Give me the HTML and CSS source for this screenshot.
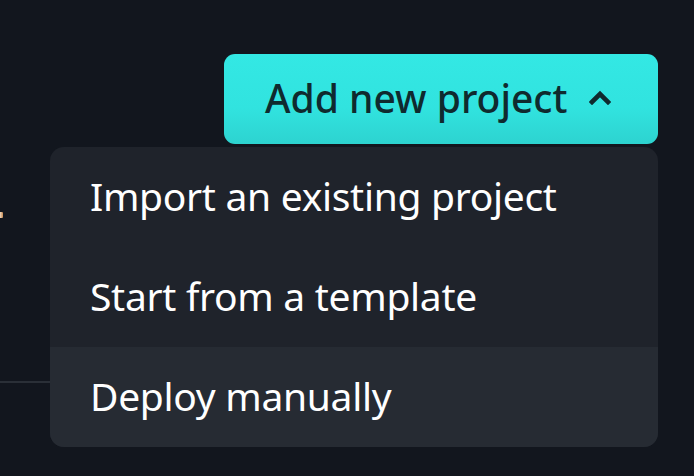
FILE: index.html
```html
<!DOCTYPE html>
<html lang="en">
<head>
<meta charset="utf-8">
<link rel="stylesheet" href="styles.css">
<title>Add new project</title>
</head>
<body>
<div class="page">
  <div class="backdrop">
    <span class="peek" aria-hidden="true"></span>
    <div class="divider"></div>
  </div>
  <div class="toolbar">
    <div class="dropdown">
      <button class="add-btn" type="button">
        <span>Add new project</span>
        <svg class="chev" width="22" height="15" viewBox="0 0 22 15" aria-hidden="true"><path d="M3 12 L11 4 L19 12" fill="none" stroke="currentColor" stroke-width="4.6" stroke-linecap="square" stroke-linejoin="miter"/></svg>
      </button>
      <ul class="menu">
        <li class="item">Import an existing project</li>
        <li class="item">Start from a template</li>
        <li class="item active">Deploy manually</li>
      </ul>
    </div>
  </div>
</div>
</body>
</html>
```
FILE: styles.css
```css
* { box-sizing: border-box; }
html, body {
  margin: 0;
  padding: 0;
  background: #12161e;
  width: 694px;
  height: 476px;
  overflow: hidden;
}
body {
  font-family: "Noto Sans", "Open Sans", sans-serif;
}
.page {
  position: relative;
  width: 694px;
  height: 476px;
}
.backdrop {
  position: absolute;
  inset: 0;
}
.peek {
  position: absolute;
  left: 0;
  top: 212px;
  width: 3px;
  height: 6px;
  background: linear-gradient(90deg, #f0d8c0, #c88a50);
  border-radius: 0 1px 1px 0;
}
.divider {
  position: absolute;
  left: 0;
  top: 381px;
  width: 60px;
  height: 2px;
  background: #2a2f37;
}
.toolbar {
  position: relative;
  display: flex;
  justify-content: flex-end;
  padding: 54px 36px 0 0;
}
.dropdown {
  position: relative;
}
.add-btn {
  display: flex;
  align-items: center;
  gap: 22px;
  width: 434px;
  height: 90px;
  padding: 0 0 4px 41px;
  border: 0;
  border-radius: 11px;
  background: linear-gradient(180deg, #33e8e4 0%, #31e3df 60%, #2dd3d0 100%);
  color: #0f2a2e;
  font-family: inherit;
  font-size: 39px;
  font-weight: 500;
  cursor: pointer;
}
.chev {
  color: #0f2a2e;
  margin-top: 0;
}
.menu {
  position: absolute;
  right: 0;
  top: 93px;
  width: 608px;
  margin: 0;
  padding: 0;
  list-style: none;
  background: #1f232b;
  border-radius: 14px;
  overflow: hidden;
}
.item {
  height: 100px;
  display: flex;
  align-items: center;
  padding: 0 0 4px 40px;
  color: #ffffff;
  font-size: 39px;
  font-weight: 400;
  letter-spacing: -0.3px;
}
.item.active {
  background: #262b33;
}
```
